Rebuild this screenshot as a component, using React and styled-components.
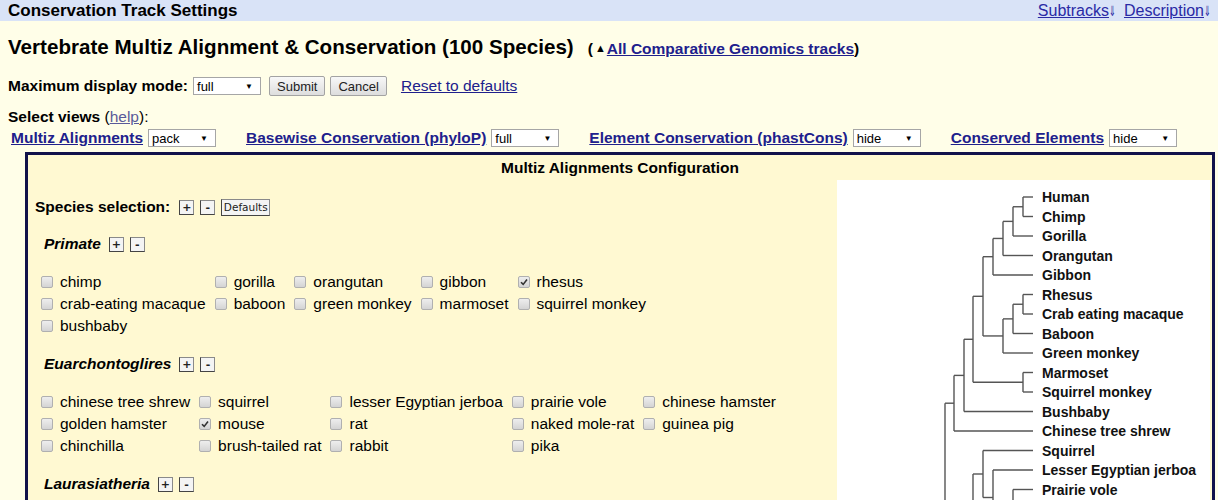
import React from "react";
import styled, { createGlobalStyle } from "styled-components";

const GlobalStyle = createGlobalStyle`
  body {
    margin: 0;
    background: #fffee8;
    font-family: "Liberation Sans", Arial, sans-serif;
    font-size: 15.5px;
    color: #000;
  }
`;

const TopBar = styled.div`
  height: 21px;
  background: #d9e3f7;
  display: flex;
  align-items: center;
  justify-content: space-between;
  padding: 0 6px 0 8px;
`;

const BarTitle = styled.div`
  font-weight: bold;
  font-size: 17px;
`;

const BarLinks = styled.div`
  display: flex;
  gap: 7px;
  font-size: 16px;
`;

const BarLink = styled.a`
  color: #2a2aa5;
  text-decoration: underline;
  .arr {
    display: inline-block;
    width: 8px;
    font-family: "DejaVu Sans", sans-serif;
    font-size: 14px;
    transform: scaleX(0.6);
    transform-origin: left center;
  }
`;

const Page = styled.div`
  padding: 0 3px 0 8px;
`;

const TitleRow = styled.div`
  display: flex;
  align-items: baseline;
  gap: 14px;
  margin-top: 14px;
  height: 24px;
`;

const Title = styled.h1`
  margin: 0;
  font-size: 20.6px;
  line-height: 24px;
  font-weight: bold;
`;

const TitleAside = styled.span`
  font-weight: bold;
  .tri {
    font-size: 11px;
    vertical-align: 2px;
    margin: 0 1px 0 2px;
  }
`;

const NavLink = styled.a`
  color: #20208c;
  text-decoration: underline;
  font-weight: ${(p) => (p.$bold ? "bold" : "normal")};
`;

const ModeRow = styled.div`
  display: flex;
  align-items: center;
  height: 22px;
  margin-top: 16px;
`;

const Label = styled.span`
  font-weight: bold;
`;

const Dropdown = styled.span`
  display: inline-flex;
  align-items: center;
  justify-content: space-between;
  box-sizing: border-box;
  width: 68px;
  height: 18px;
  background: #fff;
  border: 1px solid #a6a6a6;
  font-size: 13px;
  font-weight: normal;
  padding: 0 7px 0 3px;
  margin-left: 5px;
  .arr {
    font-size: 8px;
  }
`;

const Button = styled.span`
  display: inline-flex;
  align-items: center;
  justify-content: center;
  box-sizing: border-box;
  height: 20px;
  padding: 0 7px;
  margin-left: ${(p) => p.$ml}px;
  font-size: 13px;
  color: #222;
  border: 1px solid #a3a3a3;
  border-radius: 2px;
  background: linear-gradient(#f8f8f8, #dddddd);
`;

const PlainLink = styled.a`
  color: #20208c;
  text-decoration: underline;
  margin-left: 14px;
`;

const ViewsLabel = styled.div`
  height: 20px;
  line-height: 20px;
  margin-top: 10px;
  font-weight: bold;
  span {
    font-weight: normal;
  }
  a {
    color: #5a5a9a;
    font-weight: normal;
    text-decoration: underline;
  }
`;

const ViewsRow = styled.div`
  display: flex;
  align-items: center;
  height: 20px;
  margin-top: 1px;
  padding-left: 3px;
  gap: 30px;
`;

const ViewGroup = styled.div`
  display: flex;
  align-items: center;
`;

const ConfigBox = styled.div`
  margin: 4px 0 0 17px;
  border: 3px solid #12124a;
  background: #fff9d2;
  height: 400px;
  overflow: hidden;
`;

const ConfigHead = styled.div`
  height: 25px;
  line-height: 25px;
  text-align: center;
  font-weight: bold;
`;

const ConfigBody = styled.div`
  display: flex;
`;

const LeftCol = styled.div`
  flex: 1;
  padding-top: 17px;
`;

const SpeciesRow = styled.div`
  display: flex;
  align-items: center;
  height: 20px;
  padding-left: 7px;
  font-weight: bold;
`;

const MiniBtn = styled.span`
  display: inline-flex;
  align-items: center;
  justify-content: center;
  box-sizing: border-box;
  width: ${(p) => p.$w || 15}px;
  height: ${(p) => p.$h || 15}px;
  margin-left: ${(p) => p.$ml}px;
  border: 1px solid #8a8a8a;
  border-left-color: #444;
  border-bottom-color: #444;
  background: #f4f4f4;
  font-family: "DejaVu Sans", sans-serif;
  font-size: ${(p) => p.$fs || 11}px;
  font-weight: ${(p) => (p.$fs ? "normal" : "bold")};
  font-style: normal;
  color: #222;
`;

const GroupHead = styled.div`
  display: flex;
  align-items: center;
  height: 20px;
  padding-left: 16px;
  margin-top: 17px;
  margin-bottom: 17px;
  font-weight: bold;
  font-style: italic;
`;

const SpeciesTable = styled.table`
  border-collapse: collapse;
  margin-left: 13px;
  td {
    padding: 0 9px 0 0;
    height: 22px;
    white-space: nowrap;
    vertical-align: middle;
  }
`;

const CheckBox = styled.span`
  display: inline-block;
  position: relative;
  box-sizing: border-box;
  width: 12px;
  height: 12px;
  margin-right: 7px;
  vertical-align: -1px;
  border: 1px solid #b0b0b0;
  border-radius: 2px;
  background: linear-gradient(#eeeeee, #d4d4d4);
  svg {
    position: absolute;
    left: 0;
    top: 0;
  }
`;

const TreePanel = styled.div`
  width: 373px;
  height: 380px;
  margin-right: 2px;
  background: #fff;
`;

const TreeLabel = styled.text`
  font-family: "Liberation Sans", Arial, sans-serif;
  font-weight: bold;
  font-size: 14px;
  fill: #111;
`;

function Check({ on }) {
  return (
    <CheckBox>
      {on && (
        <svg width="10" height="10" viewBox="0 0 10 10">
          <path d="M2 5.2 L4.2 7.4 L8 2.6" fill="none" stroke="#333" strokeWidth="1.6" />
        </svg>
      )}
    </CheckBox>
  );
}

function Group({ name, rows }) {
  return (
    <>
      <GroupHead>
        {name}
        <MiniBtn $ml={8}>+</MiniBtn>
        <MiniBtn $ml={6}>-</MiniBtn>
      </GroupHead>
      {rows.length > 0 && (
        <SpeciesTable>
          <tbody>
            {rows.map((row, i) => (
              <tr key={i}>
                {row.map((s, j) => (
                  <td key={j}>
                    <Check on={s.startsWith("*")} />
                    {s.replace("*", "")}
                  </td>
                ))}
              </tr>
            ))}
          </tbody>
        </SpeciesTable>
      )}
    </>
  );
}

const primate = [
  ["chimp", "gorilla", "orangutan", "gibbon", "*rhesus"],
  ["crab-eating macaque", "baboon", "green monkey", "marmoset", "squirrel monkey"],
  ["bushbaby"],
];

const euarch = [
  ["chinese tree shrew", "squirrel", "lesser Egyptian jerboa", "prairie vole", "chinese hamster"],
  ["golden hamster", "*mouse", "rat", "naked mole-rat", "guinea pig"],
  ["chinchilla", "brush-tailed rat", "rabbit", "pika"],
];

// leaves: name, x of parent branch point
const leaves = [
  ["Human", 186],
  ["Chimp", 186],
  ["Gorilla", 176],
  ["Orangutan", 166],
  ["Gibbon", 156],
  ["Rhesus", 186],
  ["Crab eating macaque", 186],
  ["Baboon", 176],
  ["Green monkey", 166],
  ["Marmoset", 186],
  ["Squirrel monkey", 186],
  ["Bushbaby", 127],
  ["Chinese tree shrew", 117],
  ["Squirrel", 146],
  ["Lesser Egyptian jerboa", 156],
  ["Prairie vole", 176],
];
const ly = (i) => 17 + i * 19.5;

// internal nodes: x, top y, bottom y, parent x (null = no horizontal)
const nodes = [
  [186, ly(0), ly(1), 176],
  [176, 26.75, ly(2), 166],
  [166, 41.4, ly(3), 156],
  [156, 58.4, ly(4), 146],
  [186, ly(5), ly(6), 176],
  [176, 124.25, ly(7), 166],
  [166, 138.9, ly(8), 146],
  [146, 76.7, 155.9, 136],
  [186, ly(9), ly(10), 136],
  [136, 116.3, 202.25, 127],
  [127, 159.3, ly(11), 117],
  [117, 195.4, ly(12), 108],
  [108, 223.2, 400, null],
  [146, ly(13), 317.5, 136],
  [156, ly(14), 345, 146],
  [176, ly(15), 380, 166],
  [136, 294, 420, null],
];

function Tree() {
  return (
    <svg width="373" height="380">
      <g stroke="#555" strokeWidth="1.4" fill="none">
        {leaves.map(([n, px], i) => (
          <line key={n} x1={px} y1={ly(i)} x2={196} y2={ly(i)} />
        ))}
        {nodes.map(([x, a, b, px], i) => (
          <g key={i}>
            <line x1={x} y1={a} x2={x} y2={b} />
            {px !== null && <line x1={px} y1={(a + b) / 2} x2={x} y2={(a + b) / 2} />}
          </g>
        ))}
      </g>
      {leaves.map(([n], i) => (
        <TreeLabel key={n} x={205} y={ly(i) + 5}>
          {n}
        </TreeLabel>
      ))}
    </svg>
  );
}

export default function App() {
  return (
    <>
      <GlobalStyle />
      <TopBar>
        <BarTitle>Conservation Track Settings</BarTitle>
        <BarLinks>
          <BarLink>
            Subtracks<span className="arr">⇓</span>
          </BarLink>
          <BarLink>
            Description<span className="arr">⇓</span>
          </BarLink>
        </BarLinks>
      </TopBar>
      <Page>
        <TitleRow>
          <Title>Vertebrate Multiz Alignment &amp; Conservation (100 Species)</Title>
          <TitleAside>
            (<span className="tri">▲</span>
            <NavLink $bold>All Comparative Genomics tracks</NavLink>)
          </TitleAside>
        </TitleRow>
        <ModeRow>
          <Label>Maximum display mode:</Label>
          <Dropdown>
            full<span className="arr">▼</span>
          </Dropdown>
          <Button $ml={8}>Submit</Button>
          <Button $ml={5}>Cancel</Button>
          <PlainLink>Reset to defaults</PlainLink>
        </ModeRow>
        <ViewsLabel>
          Select views <span>(</span>
          <a>help</a>
          <span>):</span>
        </ViewsLabel>
        <ViewsRow>
          <ViewGroup>
            <NavLink $bold>Multiz Alignments</NavLink>
            <Dropdown>
              pack<span className="arr">▼</span>
            </Dropdown>
          </ViewGroup>
          <ViewGroup>
            <NavLink $bold>Basewise Conservation (phyloP)</NavLink>
            <Dropdown>
              full<span className="arr">▼</span>
            </Dropdown>
          </ViewGroup>
          <ViewGroup>
            <NavLink $bold>Element Conservation (phastCons)</NavLink>
            <Dropdown>
              hide<span className="arr">▼</span>
            </Dropdown>
          </ViewGroup>
          <ViewGroup>
            <NavLink $bold>Conserved Elements</NavLink>
            <Dropdown>
              hide<span className="arr">▼</span>
            </Dropdown>
          </ViewGroup>
        </ViewsRow>
        <ConfigBox>
          <ConfigHead>Multiz Alignments Configuration</ConfigHead>
          <ConfigBody>
            <LeftCol>
              <SpeciesRow>
                Species selection:
                <MiniBtn $ml={9}>+</MiniBtn>
                <MiniBtn $ml={6}>-</MiniBtn>
                <MiniBtn $ml={6} $w={49} $h={17} $fs={10.5}>
                  Defaults
                </MiniBtn>
              </SpeciesRow>
              <Group name="Primate" rows={primate} />
              <Group name="Euarchontoglires" rows={euarch} />
              <Group name="Laurasiatheria" rows={[]} />
            </LeftCol>
            <TreePanel>
              <Tree />
            </TreePanel>
          </ConfigBody>
        </ConfigBox>
      </Page>
    </>
  );
}
